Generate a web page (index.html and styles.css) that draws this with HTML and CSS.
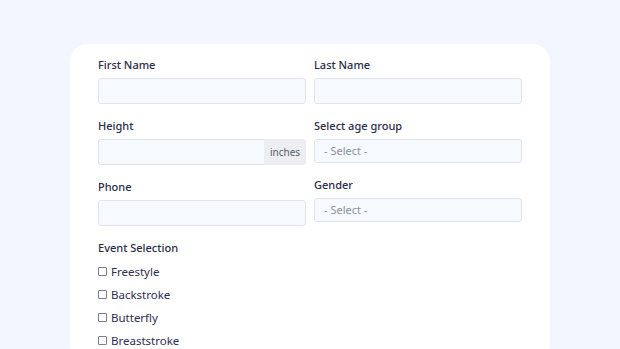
FILE: index.html
```html
<!DOCTYPE html>
<html lang="en">
<head>
    <meta charset="UTF-8">
    <title>Registration Form</title>
    <link rel="stylesheet" href="styles.css">
</head>
<body>
<div class="card">
    <div class="columns">
        <div class="column">
            <div class="field">
                <label>First Name</label>
                <div class="input"></div>
            </div>
            <div class="field">
                <label>Height</label>
                <div class="input-group">
                    <div class="input"></div>
                    <span class="addon">inches</span>
                </div>
            </div>
            <div class="field">
                <label>Phone</label>
                <div class="input"></div>
            </div>
        </div>
        <div class="column">
            <div class="field">
                <label>Last Name</label>
                <div class="input"></div>
            </div>
            <div class="field">
                <label>Select age group</label>
                <div class="select">- Select -</div>
            </div>
            <div class="field">
                <label>Gender</label>
                <div class="select">- Select -</div>
            </div>
        </div>
    </div>

    <div class="events">
        <label>Event Selection</label>
        <div class="check"><span class="box"></span>Freestyle</div>
        <div class="check"><span class="box"></span>Backstroke</div>
        <div class="check"><span class="box"></span>Butterfly</div>
        <div class="check"><span class="box"></span>Breaststroke</div>
    </div>
</div>
</body>
</html>
```

FILE: styles.css
```css
body {
    margin: 0;
    background: #f3f6fe;
    font-family: "Noto Sans", Arial, sans-serif;
    color: #2b2b49;
    height: 349px;
    overflow: hidden;
}
.card {
    width: 424px;
    margin: 44px 0 0 70px;
    padding: 14px 28px 0 28px;
    background: #ffffff;
    border-radius: 18px;
    height: 305px;
}
.columns {
    display: flex;
    gap: 8px;
}
.column {
    width: 208px;
    display: flex;
    flex-direction: column;
}
.field {
    margin-bottom: 15px;
}
label {
    display: block;
    font-size: 11px;
    font-weight: 500;
    line-height: 14px;
    margin-bottom: 6px;
}
.input {
    height: 24px;
    background: #f6faff;
    border: 1px solid #dde4f2;
    border-radius: 3px;
}
.input-group {
    display: flex;
}
.input-group .input {
    flex: 1;
    border-radius: 3px 0 0 3px;
    border-right: none;
}
.addon {
    width: 42px;
    height: 26px;
    line-height: 26px;
    text-align: center;
    background: #eceef2;
    color: #555a66;
    font-size: 10px;
    border-radius: 0 3px 3px 0;
}
.select {
    height: 22px;
    line-height: 22px;
    padding-left: 9px;
    background: #f6faff;
    border: 1px solid #dde4f2;
    border-radius: 3px;
    font-size: 11px;
    color: #8c909d;
}
.events label {
    margin-bottom: 5px;
}
.check {
    display: flex;
    align-items: center;
    height: 23px;
    font-size: 11.5px;
    color: #2e2e50;
}
.box {
    width: 7px;
    height: 7px;
    border: 1px solid #7b7f88;
    border-radius: 1px;
    margin-right: 4px;
}
```
